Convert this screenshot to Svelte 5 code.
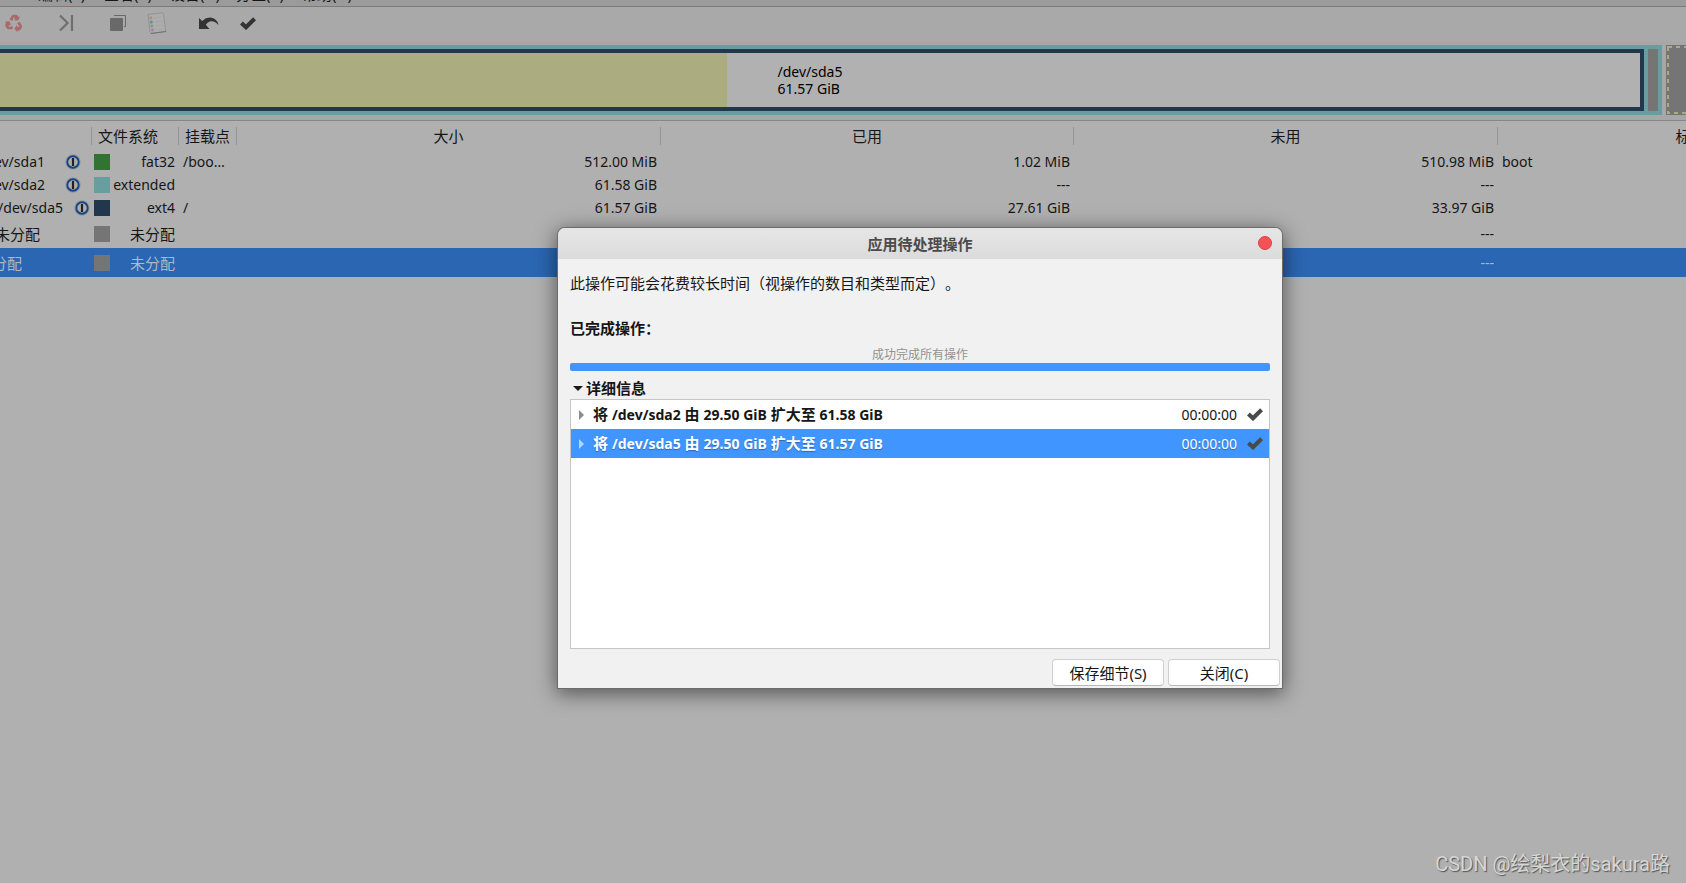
<script>
  const menus = ['编辑(E)', '查看(V)', '设备(D)', '分区(P)', '帮助(H)'];
  const partitions = [
    { name: '/dev/sda1', end: 45, locked: true, fs: 'fat32', color: '#327232', mount: '/boo…', size: '512.00 MiB', used: '1.02 MiB', unused: '510.98 MiB', flags: 'boot' },
    { name: '/dev/sda2', end: 45, locked: true, fs: 'extended', color: '#689e9f', mount: '', size: '61.58 GiB', used: '---', unused: '---', flags: '' },
    { name: '/dev/sda5', end: 63, gap: 11, locked: true, fs: 'ext4', color: '#22364c', mount: '/', size: '61.57 GiB', used: '27.61 GiB', unused: '33.97 GiB', flags: '' },
    { name: '未分配', end: 40, fs: '未分配', color: '#757575', mount: '', size: '', used: '---', unused: '---', flags: '', tall: true },
    { name: '未分配', end: 22, fs: '未分配', color: '#757575', mount: '', size: '', used: '---', unused: '---', flags: '', tall: true, selected: true }
  ];
  const operations = [
    { device: '/dev/sda2', from: '29.50 GiB', to: '61.58 GiB', time: '00:00:00' },
    { device: '/dev/sda5', from: '29.50 GiB', to: '61.57 GiB', time: '00:00:00', selected: true }
  ];
  const recycleArm = 'M4.6 5.4 L6.6 2 Q7.4 .8 8.8 .8 L11 .8 Q12.2 .8 12.9 2 L13.5 3.1 L15 2.4 L13.2 6.6 L8.8 6.2 L10.2 5.2 L8.9 2.9 L7.3 7 Z';
</script>

<div class="app">
  <nav class="menubar">
    {#each menus as menu}<button>{menu}</button>{/each}
  </nav>

  <div class="toolbar">
    <button class="tool recycle" aria-label="删除">
      <svg width="18" height="18" viewBox="0 0 18 18" fill="#a8686c">
        <path d={recycleArm} />
        <path d={recycleArm} transform="rotate(120 9 9.5)" />
        <path d={recycleArm} transform="rotate(240 9 9.5)" />
      </svg>
    </button>
    <button class="tool resize" aria-label="调整大小/移动">
      <svg width="16" height="18" viewBox="0 0 16 18"><path d="M1 1.5 L8.6 9 L1 16.5 M13 1 V17" fill="none" stroke="#6e6e6e" stroke-width="2.2" /></svg>
    </button>
    <button class="tool copy" aria-label="复制">
      <svg width="16" height="16" viewBox="0 0 16 16"><path d="M0 4 a1 1 0 0 1 1-1 H12 a1 1 0 0 1 1 1 V15 a1 1 0 0 1-1 1 H1 a1 1 0 0 1-1-1 Z" fill="#696969" /><path d="M4 .5 H15.5 V11.5 H14" fill="none" stroke="#696969" /></svg>
    </button>
    <button class="tool paste" aria-label="粘贴">
      <svg width="20" height="22" viewBox="0 0 20 22">
        <path d="M1 2.5 L15.5 .8 Q16.5 .8 16.6 2 L18.8 19.3 L4 21.5 Q2.5 20 2.5 15 Z" fill="#acacac" stroke="#929292" />
        <path d="M4 21.5 L19 19.5" stroke="#707070" />
        <path d="M6 6 L15 5 M7 10 L16 9 M8 14 L16 13 M9 18 L17 17" stroke="#a6a6a6" />
        <circle cx="3.8" cy="6" r="1.4" fill="#bb8d50" /><circle cx="4.3" cy="10" r="1.5" fill="#5090b4" />
        <circle cx="4.9" cy="14" r="1.4" fill="#74a270" /><circle cx="5.5" cy="18" r="1.4" fill="#9a84ab" />
      </svg>
    </button>
    <button class="tool undo" aria-label="撤销">
      <svg width="20" height="13" viewBox="0 0 20 13"><path d="M0 1 L3.2 4 Q7 .4 11.5 .6 Q17.8 1.2 19.6 8 Q16 3.6 11.5 4.2 Q8.5 4.8 6.8 7.7 L10.5 12 H0 Z" fill="#333" /></svg>
    </button>
    <button class="tool apply" aria-label="应用">
      <svg width="16" height="13" viewBox="0 0 16 13"><path d="M1.4 6 L6 10.2 L14.6 1.8" fill="none" stroke="#333" stroke-width="4.2" /></svg>
    </button>
  </div>

  <div class="disk">
    <div class="extended">
      <div class="sda5">
        <div class="usedspace"></div>
        <div class="caption">/dev/sda5<br />61.57 GiB</div>
      </div>
      <div class="free"></div>
    </div>
    <div class="unallocated">
      <svg width="100%" height="70"><rect x="2" y="2" width="400" height="66" fill="none" stroke="#abac80" stroke-width="2" stroke-dasharray="4 4" /></svg>
    </div>
  </div>

  <div class="tablewrap">
    <table>
      <colgroup><col class="c1" /><col class="c2" /><col class="c3" /><col class="c4" /><col class="c5" /><col class="c6" /><col class="c7" /></colgroup>
      <thead>
        <tr>
          {#each ['', '文件系统', '挂载点', '大小', '已用', '未用', '标志'] as head}
            <th scope="col"><span>{head}</span></th>
          {/each}
        </tr>
      </thead>
      <tbody>
        {#each partitions as p}
          <tr class:tall={p.tall} class:selected={p.selected}>
            <td>
              <div class="partition">
                <span class="name" style="width: {p.end}px">{p.name}</span>
                {#if p.locked}
                  <svg style="margin-left: {p.gap ?? 20}px" width="16" height="16" viewBox="0 0 16 16">
                    <circle cx="8" cy="8" r="7.7" fill="#979797" /><circle cx="8" cy="8" r="5.7" fill="#aeada6" stroke="#14458a" stroke-width="1.9" />
                    <path d="M8 4 V12" stroke="#222" stroke-width="2.2" />
                  </svg>
                {/if}
              </div>
            </td>
            <td><div class="fs"><i style="background: {p.color}"></i><span>{p.fs}</span></div></td>
            <td class="left">{p.mount}</td>
            <td>{p.size}</td>
            <td>{p.used}</td>
            <td>{p.unused}</td>
            <td class="left">{p.flags}</td>
          </tr>
        {/each}
      </tbody>
    </table>
  </div>

  <div class="watermark">CSDN @绘梨衣的sakura路</div>

  <div class="overlay">
    <div class="dialog" role="dialog" aria-labelledby="title">
      <header>
        <h1 id="title">应用待处理操作</h1>
        <button class="close" aria-label="关闭窗口"></button>
      </header>
      <div class="body">
        <p>此操作可能会花费较长时间（视操作的数目和类型而定）。</p>
        <h2>已完成操作：</h2>
        <label class="status" for="progress">成功完成所有操作</label>
        <progress id="progress" value="1" max="1"></progress>
        <button class="expander">
          <svg width="10" height="5" viewBox="0 0 10 5"><path d="M0 0 H10 L5 5 Z" fill="#1b1b1b" /></svg>详细信息
        </button>
        <ul>
          {#each operations as op}
            <li class:selected={op.selected}>
              <svg class="arrow" width="5" height="10" viewBox="0 0 5 10"><path d="M0 0 L5 5 L0 10 Z" fill="currentColor" /></svg>
              <b>将 <span>{op.device}</span> 由 <span>{op.from}</span> 扩大至 <span>{op.to}</span></b>
              <time>{op.time}</time>
              <svg width="16" height="13" viewBox="0 0 16 13"><path d="M1.4 6 L6 10.2 L14.6 1.8" fill="none" stroke="#4a4a4a" stroke-width="4.2" /></svg>
            </li>
          {/each}
        </ul>
      </div>
      <footer>
        <button>保存细节(S)</button>
        <button>关闭(C)</button>
      </footer>
    </div>
  </div>
</div>

<style>
  :global(body) { background: #b0b0b0; }
  .app {
    position: relative;
    min-height: 100vh;
    overflow: hidden;
    background: #b0b0b0;
    color: #161616;
    font: 14px/20px "Noto Sans", "Noto Sans CJK SC", sans-serif;
    text-spacing-trim: space-all;
  }
  .app * { box-sizing: border-box; }
  button { margin: 0; padding: 0; border: 0; background: none; color: inherit; font: inherit; }
  svg { display: block; flex: none; }

  .menubar {
    display: flex;
    align-items: flex-end;
    gap: 16px;
    height: 7px;
    padding-left: 38px;
    overflow: hidden;
    background: #9b9b9b;
    border-bottom: 1px solid #7b7b7b;
  }
  .menubar button { flex: none; width: 50px; padding-bottom: 1px; font-size: 15px; line-height: 22px; text-align: left; white-space: nowrap; }

  .toolbar { display: flex; align-items: center; height: 34px; padding: 0 0 2px 5px; background: #a9a9a9; }
  .resize { margin-left: 36px; }
  .copy { margin-left: 35px; }
  .paste { margin-left: 21px; }
  .undo { margin-left: 32px; }
  .apply { margin-left: 21px; }

  .disk { display: flex; gap: 4px; height: 80px; padding: 4px 0 5px; background: #a7a7a7; border-bottom: 1px solid #868686; }
  .extended { display: flex; flex: 1; gap: 4px; padding: 4px 4px 4px 0; background: #689e9f; }
  .sda5 { display: flex; flex: 1; border: 4px solid #22364c; border-left: 0; background: #b1b1b1; }
  .usedspace { width: 44.3%; background: #abac80; }
  .caption { padding: 10px 0 0 51px; color: #000; line-height: 17px; }
  .free { width: 10px; background: #757575; }
  .unallocated { width: 20px; overflow: hidden; background: #757575; }

  .tablewrap { overflow: hidden; }
  table { width: 1884px; table-layout: fixed; border-collapse: collapse; }
  .c1 { width: 92px; }
  .c2 { width: 87px; }
  .c3 { width: 58px; }
  .c4 { width: 424px; }
  .c5 { width: 413px; }
  .c6 { width: 424px; }
  th { height: 29px; padding: 0; font-size: 15px; font-weight: 400; }
  th span { display: block; height: 18px; line-height: 18px; border-right: 1px solid #959595; }
  th:nth-child(2) span { padding-right: 14px; }
  td { height: 23px; padding: 0 4px 0 0; text-align: right; white-space: nowrap; line-height: 22px; }
  td:first-child { padding: 0; }
  .left { padding-left: 4px; text-align: left; }
  .tall td { height: 29px; }
  .tall .name, .tall .fs { font-size: 15px; }
  tr.selected { background: #2b66b2; color: #b0b8c4; }
  .partition { display: flex; align-items: center; overflow: hidden; }
  .name { display: flex; flex: none; justify-content: flex-end; }
  .fs { display: flex; align-items: center; justify-content: space-between; padding-left: 2px; }
  .fs i { width: 16px; height: 16px; }

  .watermark {
    position: absolute;
    right: 16px;
    bottom: 4px;
    color: #d6d6d6;
    font: 20px/30px Roboto, "Noto Sans CJK SC", sans-serif;
    text-shadow: 1px 1px 1px #555;
  }

  .overlay { position: absolute; inset: 0; display: flex; justify-content: center; align-items: flex-start; padding: 228px 0 0 154px; }
  .dialog {
    width: 724px;
    max-width: 100%;
    border-radius: 7px 7px 0 0;
    background: #f1f1f1;
    box-shadow: 0 0 0 1px #6c6c6c, 0 4px 20px 2px rgba(0, 0, 0, 0.5);
  }
  header {
    position: relative;
    display: flex;
    justify-content: center;
    align-items: center;
    height: 31px;
    border-radius: 7px 7px 0 0;
    background: linear-gradient(#e6e6e6, #dbdbdb);
  }
  h1 { margin: 0; color: #4b4b4b; font-size: 15px; line-height: 22px; font-weight: 700; }
  .close { position: absolute; right: 10px; top: 8px; width: 14px; height: 14px; border: 1px solid #e04048; border-radius: 50%; background: #f75057; }
  .body { padding: 13px 12px 10px; }
  p { margin: 0; font-size: 15px; line-height: 22px; }
  h2 { margin: 23px 0 0; font-size: 15px; line-height: 22px; font-weight: 700; }
  .status { display: block; margin-top: 7px; color: #929292; font-size: 12px; line-height: 17px; text-align: center; }
  progress { display: block; width: 100%; height: 8px; border: 0; border-radius: 2px; overflow: hidden; appearance: none; background: #4195ff; }
  progress::-webkit-progress-bar { background: #4195ff; }
  progress::-webkit-progress-value { background: #4195ff; }
  .expander { display: flex; align-items: center; gap: 3px; margin: 6px 0 0 3px; font-size: 15px; line-height: 22px; font-weight: 700; }
  ul { height: 250px; margin: 0; padding: 0; border: 1px solid #c5c5c5; background: #fff; list-style: none; }
  li { display: flex; align-items: center; height: 29px; padding: 0 6px 0 8px; }
  li b { flex: 1; padding-left: 9px; font-size: 15px; }
  li b span { font-size: 14px; }
  li time { margin-right: 10px; }
  .arrow { color: #8c8c8c; }
  li.selected { background: #4195ff; color: #fff; text-shadow: 0 1px 1px #2d68b2; }
  li.selected .arrow { color: #b3d5ff; }
  footer { display: flex; justify-content: flex-end; gap: 4px; padding: 0 2px 2px; }
  footer button { width: 112px; height: 27px; border: 1px solid #d0d0d0; border-bottom-color: #b8b8b8; border-radius: 4px; background: #fff; font-size: 15px; line-height: 22px; }
</style>
